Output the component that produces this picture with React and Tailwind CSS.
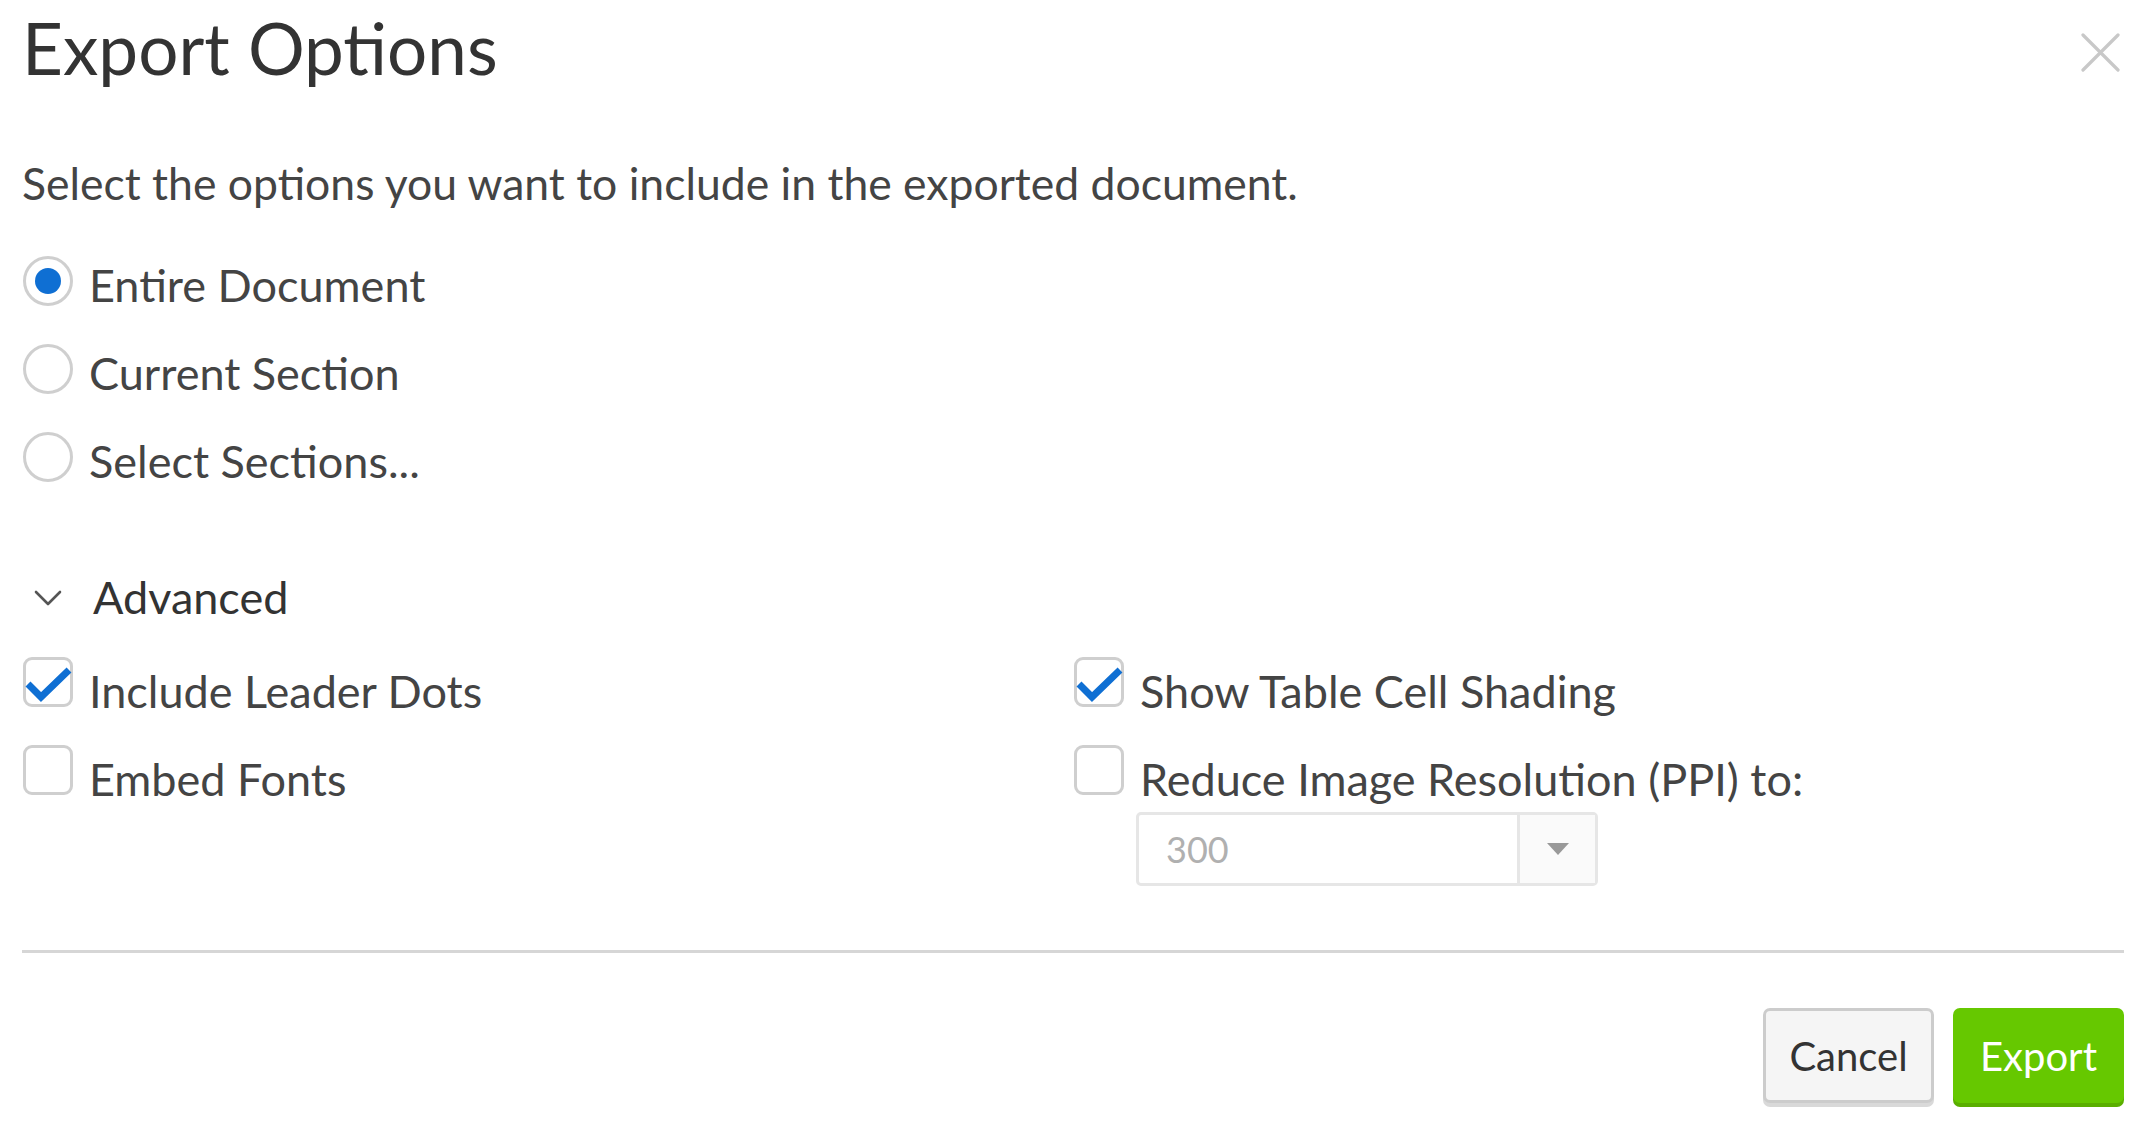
import { useState } from "react";

function Radio({ checked }) {
  return (
    <span className="mt-[15px] grid h-[50px] w-[50px] shrink-0 place-items-center rounded-full border-[3px] border-[#cfcfcf] bg-white">
      {checked && <span className="h-[26px] w-[26px] rounded-full bg-[#0f6fd3]" />}
    </span>
  );
}

function Check({ checked }) {
  return (
    <span className="relative mt-[10px] h-[50px] w-[50px] shrink-0 rounded-[9px] border-[3px] border-[#cfcfcf] bg-white">
      {checked && (
        <svg className="absolute left-[-3px] top-[-3px]" width="50" height="50" viewBox="0 0 50 50" fill="none">
          <path d="M5 27 L18 40 L46 13" stroke="#0f6fd3" strokeWidth="7" strokeLinejoin="miter" />
        </svg>
      )}
    </span>
  );
}

const radios = ["Entire Document", "Current Section", "Select Sections..."];

export default function App() {
  const [mode] = useState(0);

  return (
    <div className="h-[1126px] w-[2154px] bg-white pl-[22px] pr-[30px] font-['Lato','Open_Sans',sans-serif] text-[#444]">
      <div className="flex h-[96px] items-start justify-between">
        <h1 className="text-[71px] leading-[96px] text-[#333]">Export Options</h1>
        <button className="mr-[4px] mt-[33px] text-[#c8c8c8]">
          <svg width="39" height="39" viewBox="0 0 39 39">
            <path d="M2 2 L37 37 M37 2 L2 37" stroke="currentColor" strokeWidth="3.2" strokeLinecap="round" />
          </svg>
        </button>
      </div>

      <p className="mt-[47px] text-[44.5px] leading-[80px]">
        Select the options you want to include in the exported document.
      </p>

      <div className="mt-[18px]">
        {radios.map((label, i) => (
          <label key={label} className="flex h-[88px] items-start gap-[16px] pl-[1px]">
            <Radio checked={i === mode} />
            <span className="text-[45px] leading-[88px]">{label}</span>
          </label>
        ))}
      </div>

      <div className="mt-[48px] flex h-[88px] items-start">
        <svg className="ml-[12px] mt-[37px]" width="28" height="16" viewBox="0 0 28 16" fill="none">
          <path d="M2 2 L14 14 L26 2" stroke="#555" strokeWidth="2.6" strokeLinecap="round" strokeLinejoin="round" />
        </svg>
        <span className="ml-[31px] text-[45px] leading-[88px] text-[#333]">Advanced</span>
      </div>

      <div className="mt-[6px] grid grid-cols-2">
        <div>
          <label className="flex h-[88px] items-start gap-[16px] pl-[1px]">
            <Check checked />
            <span className="text-[45px] leading-[88px]">Include Leader Dots</span>
          </label>
          <label className="flex h-[88px] items-start gap-[16px] pl-[1px]">
            <Check />
            <span className="text-[45px] leading-[88px]">Embed Fonts</span>
          </label>
        </div>
        <div>
          <label className="flex h-[88px] items-start gap-[16px] pl-[1px]">
            <Check checked />
            <span className="text-[45px] leading-[88px]">Show Table Cell Shading</span>
          </label>
          <label className="flex h-[77px] items-start gap-[16px] pl-[1px]">
            <Check />
            <span className="text-[45px] leading-[88px]">Reduce Image Resolution (PPI) to:</span>
          </label>
          <div className="ml-[63px] flex h-[74px] w-[462px] rounded-[5px] border-[3px] border-[#e6e6e6] bg-white">
            <span className="flex-1 pl-[27px] text-[36px] leading-[68px] text-[#b0b0b0]">300</span>
            <span className="grid w-[78px] place-items-center border-l-[3px] border-[#e6e6e6] bg-[#fafafa]">
              <svg width="22" height="12" viewBox="0 0 22 12">
                <path d="M0 0 L22 0 L11 12 Z" fill="#999" />
              </svg>
            </span>
          </div>
        </div>
      </div>

      <div className="mt-[64px] h-[3px] w-full bg-[#d6d6d6]" />

      <div className="mt-[55px] flex justify-end gap-[19px]">
        <button className="h-[95px] w-[171px] rounded-[7px] border-[3px] border-[#cccccc] bg-[#f5f5f5] text-[40px] text-[#333] shadow-[0_4px_0_#d9d9d9]">
          Cancel
        </button>
        <button className="h-[95px] w-[171px] rounded-[7px] bg-[#66c800] text-[40px] text-white shadow-[0_4px_0_#5aae00]">
          Export
        </button>
      </div>
    </div>
  );
}
